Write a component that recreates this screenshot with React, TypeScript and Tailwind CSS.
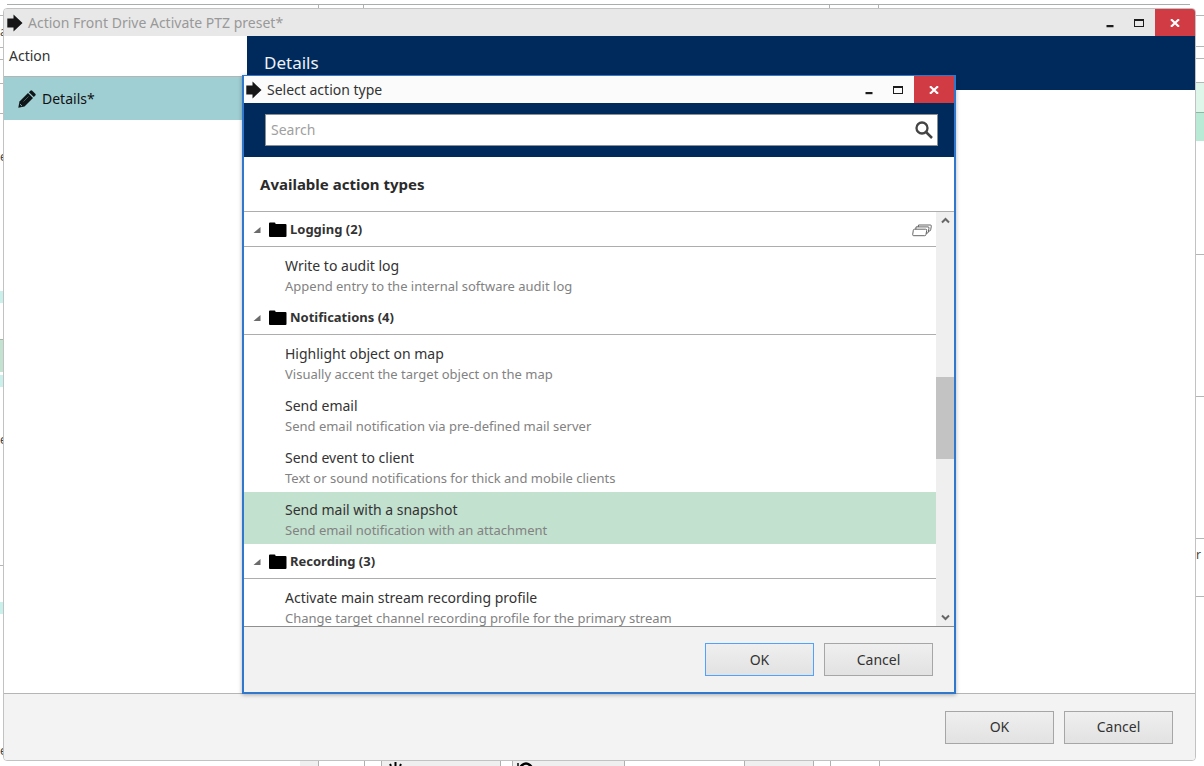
import { useState } from 'react';

interface ActionType {
  name: string;
  description: string;
}

interface ActionGroup {
  title: string;
  items: ActionType[];
}

const groups: ActionGroup[] = [
  {
    title: 'Logging',
    items: [
      {
        name: 'Write to audit log',
        description: 'Append entry to the internal software audit log',
      },
    ],
  },
  {
    title: 'Notifications',
    items: [
      {
        name: 'Highlight object on map',
        description: 'Visually accent the target object on the map',
      },
      {
        name: 'Send email',
        description: 'Send email notification via pre-defined mail server',
      },
      {
        name: 'Send event to client',
        description: 'Text or sound notifications for thick and mobile clients',
      },
      {
        name: 'Send mail with a snapshot',
        description: 'Send email notification with an attachment',
      },
    ],
  },
  {
    title: 'Recording',
    items: [
      {
        name: 'Activate main stream recording profile',
        description:
          'Change target channel recording profile for the primary stream',
      },
    ],
  },
];

const groupCounts: Record<string, number> = {
  Logging: 2,
  Notifications: 4,
  Recording: 3,
};

function ArrowIcon() {
  return (
    <svg width="16" height="18" viewBox="0 0 16 18" className="shrink-0">
      <path d="M0.300 4.500h6.200V0.500L15.500 9l-9 8.500v-4H0.300z" fill="#161616" />
    </svg>
  );
}

function PencilIcon() {
  return (
    <svg width="18" height="18" viewBox="0 0 18 18" className="shrink-0">
      <path
        d="M0.300 17.700l1.200-6.200 8.500-8.500 5 5-8.500 8.500z"
        fill="#0d1518"
      />
      <path
        d="M10.900 2.200l1.500-1.500q.9-.8 1.800 0l3.100 3.100q.8.9 0 1.800l-1.500 1.500z"
        fill="#0d1518"
      />
      <path d="M5.500 11.500l5-5" stroke="#6d9296" strokeWidth="0.600" />
      <path d="M1.900 14l2.100 2.100" stroke="#9fced3" strokeWidth="0.800" />
    </svg>
  );
}

function FolderIcon() {
  return (
    <svg width="18" height="16" viewBox="0 0 18 16" className="shrink-0">
      <path
        d="M0 1.500Q0 0.500 1 0.500H5.500Q6.500 0.500 6.500 1.500V2H16.500Q17.500 2 17.500 3V14Q17.500 15 16.500 15H1Q0 15 0 14z"
        fill="#000"
      />
    </svg>
  );
}

function StackIcon() {
  return (
    <svg
      width="20"
      height="13"
      viewBox="0 0 20 13"
      fill="#fff"
      stroke="#555"
      strokeWidth="0.900"
      strokeLinejoin="round"
      className="shrink-0"
    >
      <path d="M6.500 1H18.300Q19.500 1 19.300 2.200L18.700 5.800Q18.500 7 17.400 7H5.500z" />
      <path d="M4 2.900H16Q17.200 2.900 17 4.100L16.300 8Q16.100 9.200 15 9.200H3.500z" />
      <path d="M2.500 5.200H13.700Q14.900 5.200 14.700 6.400L14 10.500Q13.800 11.700 12.700 11.700H1.700Q0.500 11.700 0.700 10.500L1.300 6.300Q1.500 5.200 2.500 5.200z" />
    </svg>
  );
}

function WindowControls() {
  return (
    <div className="flex h-full">
      <button
        type="button"
        aria-label="Minimize"
        className="flex w-[29px] items-center justify-center"
      >
        <svg width="8" height="12" viewBox="0 0 8 12">
          <path d="M0.500 8h7v2.200h-7z" fill="#1c1c1c" />
        </svg>
      </button>
      <button
        type="button"
        aria-label="Maximize"
        className="flex w-[30px] items-center justify-center"
      >
        <svg width="10" height="8" viewBox="0 0 10 8">
          <path d="M0 0h10v8H0zM1 2v5h8V2z" fill="#1c1c1c" fillRule="evenodd" />
        </svg>
      </button>
      <button
        type="button"
        aria-label="Close"
        className="ml-px flex w-10 items-center justify-center bg-[#d13c44]"
      >
        <svg width="10" height="8" viewBox="0 0 10 8">
          <path d="M1 0.300l8 7.400M9 0.300l-8 7.400" stroke="#fff" strokeWidth="2.200" />
        </svg>
      </button>
    </div>
  );
}

const buttonStyles = {
  primary:
    'h-[33px] w-[109px] border border-blue-400 bg-linear-to-b from-[#efefef] to-[#e2e2e2] text-sm text-[#333]',
  normal:
    'h-[33px] w-[109px] border border-[#a6a6a6] bg-linear-to-b from-[#efefef] to-[#e2e2e2] text-sm text-[#333]',
};

interface DialogButtonProps {
  label: string;
  variant?: keyof typeof buttonStyles;
}

function DialogButton({ label, variant = 'normal' }: DialogButtonProps) {
  return (
    <button type="button" className={buttonStyles[variant]}>
      {label}
    </button>
  );
}

// Slivers of the application that show around the open window
function TopEdge() {
  return (
    <div className="flex h-2 flex-col pt-[4px] pr-[14px] pl-[7px]">
      <div className="h-px shrink-0 bg-[#a9adad]" />
      <div className="flex h-[3px] pl-[311px]">
        <div className="w-[46px] border-x border-[#b0b0b0]" />
        <div className="ml-[465px] w-[50px] border-x border-[#b0b0b0]" />
      </div>
    </div>
  );
}

function LeftEdge() {
  return (
    <div className="w-[3px] shrink-0 overflow-hidden text-xs leading-3 text-[#444]">
      <div className="h-2 border-b border-[#b5b5b5]" />
      <div className="mt-[10px] h-3">a</div>
      <div className="h-[10px] border-b border-[#b5b5b5]" />
      <div className="h-3 border-b border-[#b5b5b5]" />
      <div className="h-6 border-b border-[#b5b5b5]" />
      <div className="h-[30px] border-b border-[#b5b5b5]" />
      <div className="mt-[37px] h-3">e</div>
      <div className="mt-32 h-3 bg-[#c9f0ea]" />
      <div className="mt-9 h-[33px] border-t border-[#a5b5a9] bg-[#c4e2d0]" />
      <div className="mt-[3px] h-3 bg-[#c9f0ea]" />
      <div className="mt-[47px] h-3">e</div>
      <div className="h-[120px] border-b border-[#b5b5b5]" />
      <div className="mt-9 h-3 bg-[#c9f0ea]" />
      <div className="mt-[131px] h-3">e</div>
    </div>
  );
}

function RightEdge() {
  return (
    <div className="w-2 shrink-0 overflow-hidden text-xs leading-3 text-[#444]">
      <div className="h-2 border-b border-[#b5b5b5]" />
      <div className="h-[31px] border-b border-[#b5b5b5]" />
      <div className="h-3 border-b border-[#b5b5b5]" />
      <div className="h-6 border-b border-[#b5b5b5]" />
      <div className="h-[30px] border-b border-[#8fb5a3] bg-[#def5ea]" />
      <div className="h-7 bg-[#b9ead6]" />
      <div className="h-[114px] border-b border-[#b5b5b5]" />
      <div className="h-[142px] border-b border-[#b5b5b5]" />
      <div className="h-[142px] border-b border-[#b5b5b5]" />
      <div className="mt-[10px] h-3">r</div>
      <div className="h-9 border-b border-[#b5b5b5]" />
    </div>
  );
}

function BottomEdge() {
  return (
    <div className="flex h-[5px] overflow-hidden pl-[300px]">
      <div className="w-[19px] border-r border-[#b0b0b0] bg-[#efefef]" />
      <div className="w-[46px] border-r border-[#b0b0b0]" />
      <div className="ml-4 w-[120px] border-x border-[#b0b0b0] bg-[#efefef] pl-1.5">
        <svg width="16" height="5" viewBox="0 0 16 5">
          <path d="M2 3l1 2M7.500 1v4M13 3l-1 2" stroke="#000" strokeWidth="2" />
        </svg>
      </div>
      <div className="ml-[11px] w-[113px] border-x border-[#b0b0b0] bg-[#efefef] pl-1">
        <svg width="18" height="5" viewBox="0 0 18 5">
          <path d="M1 2v3" stroke="#000" strokeWidth="1.500" />
          <path d="M3 6.500q6-8 12 0" stroke="#000" strokeWidth="2.500" fill="none" />
        </svg>
      </div>
      <div className="ml-[119px] w-[70px] border-x border-[#b0b0b0] bg-[#efefef]" />
      <div className="ml-4 w-[50px] border-x border-[#b0b0b0]" />
    </div>
  );
}

interface GroupSectionProps {
  group: ActionGroup;
  selected: string;
  onSelect: (name: string) => void;
  showCollapseAll: boolean;
}

function GroupSection({
  group,
  selected,
  onSelect,
  showCollapseAll,
}: GroupSectionProps) {
  return (
    <section>
      <div className="mb-px flex h-[35px] items-center border-b border-[#adadad] pt-0.5 pr-1 pl-[9px]">
        <button
          type="button"
          aria-expanded="true"
          className="flex flex-1 items-center text-left text-[13px] font-bold text-[#333]"
        >
          <svg width="8" height="8" viewBox="0 0 8 8" className="shrink-0">
            <path d="M7.500 1v6H0.500z" fill="#6b6b6b" />
          </svg>
          <span className="mr-[3px] ml-2">
            <FolderIcon />
          </span>
          {group.title} ({groupCounts[group.title]})
        </button>
        {showCollapseAll && (
          <button type="button" aria-label="Collapse all">
            <StackIcon />
          </button>
        )}
      </div>
      <ul>
        {group.items.map((item) => (
          <li key={item.name}>
            <button
              type="button"
              onClick={() => onSelect(item.name)}
              className={`block h-[52px] w-full pt-1 pl-[41px] text-left ${
                item.name === selected ? 'bg-[#c3e1cf]' : ''
              }`}
            >
              <span className="block text-sm leading-[21px] text-[#333]">
                {item.name}
              </span>
              <span className="block text-[13px] leading-[21px] text-[#828282]">
                {item.description}
              </span>
            </button>
          </li>
        ))}
      </ul>
    </section>
  );
}

function SelectActionDialog() {
  const [selected, setSelected] = useState('Send mail with a snapshot');
  const [query, setQuery] = useState('');

  return (
    <div
      role="dialog"
      aria-label="Select action type"
      className="absolute top-[75px] right-[248px] bottom-[72px] left-[242px] flex flex-col border-2 border-t border-[#2f78cc] bg-white shadow-[0_1px_4px_rgba(0,0,0,0.3)]"
    >
      <header className="flex h-[27px] shrink-0 items-center bg-[#fbfbfb] pl-[2px]">
        <ArrowIcon />
        <h2 className="ml-[5px] flex-1 text-sm text-[#333]">
          Select action type
        </h2>
        <WindowControls />
      </header>

      <div className="shrink-0 bg-[#002a5c] py-[11px] pr-4 pl-[21px]">
        <div className="flex h-8 items-center border border-[#8a8f94] bg-white pr-1 pl-[5px]">
          <input
            type="text"
            aria-label="Search"
            placeholder="Search"
            value={query}
            onChange={(e) => setQuery(e.target.value)}
            className="min-w-0 flex-1 text-sm outline-none placeholder:text-[#a0a0a0]"
          />
          <button type="button" aria-label="Run search">
            <svg width="18" height="18" viewBox="0 0 18 18" fill="none">
              <circle cx="7" cy="7" r="5.500" stroke="#444" strokeWidth="2.300" />
              <path d="M11 11l6 6" stroke="#444" strokeWidth="2.500" />
            </svg>
          </button>
        </div>
      </div>

      <h3 className="flex h-[55px] shrink-0 items-center border-b border-[#adadad] pl-4 text-[15px] font-bold text-[#2b2b2b]">
        Available action types
      </h3>

      <div className="flex min-h-0 flex-1">
        <div className="flex-1 overflow-hidden">
          {groups.map((group, index) => (
            <GroupSection
              key={group.title}
              group={group}
              selected={selected}
              onSelect={setSelected}
              showCollapseAll={index === 0}
            />
          ))}
        </div>
        <div className="flex w-[18px] flex-col items-center justify-between bg-[#efefef] py-[5px]">
          <svg width="9" height="7" viewBox="0 0 9 7" fill="none">
            <path d="M1 5.500l3.500-3.500 3.500 3.500" stroke="#666" strokeWidth="2" />
          </svg>
          <div className="mb-[3px] h-[82px] w-full bg-[#c3c3c3]" />
          <svg width="9" height="7" viewBox="0 0 9 7" fill="none">
            <path d="M1 1.500l3.500 3.500 3.500-3.500" stroke="#666" strokeWidth="2" />
          </svg>
        </div>
      </div>

      <footer className="flex h-[66px] shrink-0 items-center justify-end gap-[10px] border-t border-[#8f8f8f] bg-[#f2f2f2] pr-[21px]">
        <DialogButton label="OK" variant="primary" />
        <DialogButton label="Cancel" />
      </footer>
    </div>
  );
}

export default function App() {
  return (
    <div className="relative flex h-screen flex-col overflow-hidden bg-white font-['Noto_Sans',sans-serif]">
      <TopEdge />
      <div className="flex min-h-0 flex-1">
        <LeftEdge />
        <main className="flex min-w-0 flex-1 flex-col overflow-hidden rounded-[4px] border border-[#c2c2c2] bg-white">
          <header className="flex h-[27px] shrink-0 items-center bg-[#e8e8e8] pl-[3px]">
            <ArrowIcon />
            <h1 className="ml-[5px] flex-1 text-sm text-[#999]">
              Action Front Drive Activate PTZ preset*
            </h1>
            <WindowControls />
          </header>

          <div className="flex min-h-0 flex-1">
            <nav className="w-[243px] shrink-0">
              <h2 className="flex h-[41px] items-center border-b border-[#b5b5b5] pl-[5px] text-sm text-[#333]">
                Action
              </h2>
              <a
                href="#details"
                className="flex h-[43px] items-center gap-1.5 bg-[#9fced3] pl-[14px] text-sm text-[#111]"
              >
                <PencilIcon />
                Details*
              </a>
            </nav>
            <section id="details" className="flex-1">
              <h2 className="h-[54px] bg-[#002a5c] pt-[15px] pl-[17px] text-[17px] leading-6 text-[#eef2f6]">
                Details
              </h2>
            </section>
          </div>

          <footer className="flex h-[67px] shrink-0 items-center justify-end gap-[10px] border-t border-[#b5b5b5] bg-[#f3f3f3] pr-[22px]">
            <DialogButton label="OK" />
            <DialogButton label="Cancel" />
          </footer>
        </main>
        <RightEdge />
      </div>
      <BottomEdge />
      <SelectActionDialog />
    </div>
  );
}
